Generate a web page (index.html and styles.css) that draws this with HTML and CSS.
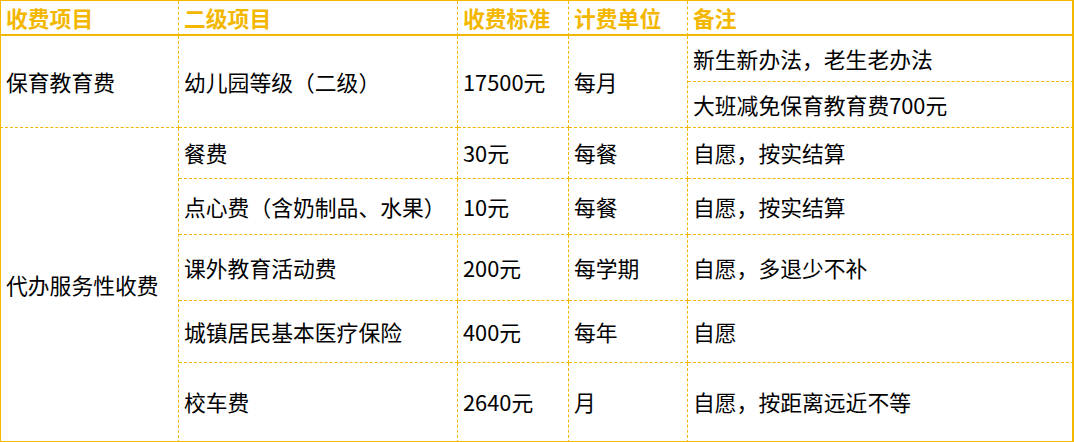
FILE: index.html
```html
<!DOCTYPE html>
<html lang="zh-CN">
<head>
<meta charset="utf-8">
<title>收费项目</title>
<link rel="stylesheet" href="styles.css">
</head>
<body>
<div class="sheet">
  <div class="cell head">收费项目</div>
  <div class="cell head">二级项目</div>
  <div class="cell head">收费标准</div>
  <div class="cell head">计费单位</div>
  <div class="cell head last-col">备注</div>

  <div class="cell span2">保育教育费</div>
  <div class="cell span2">幼儿园等级（二级）</div>
  <div class="cell span2">17500元</div>
  <div class="cell span2">每月</div>
  <div class="cell last-col">新生新办法，老生老办法</div>
  <div class="cell last-col">大班减免保育教育费700元</div>

  <div class="cell span5 last-row">代办服务性收费</div>
  <div class="cell">餐费</div>
  <div class="cell">30元</div>
  <div class="cell">每餐</div>
  <div class="cell last-col">自愿，按实结算</div>

  <div class="cell">点心费（含奶制品、水果）</div>
  <div class="cell">10元</div>
  <div class="cell">每餐</div>
  <div class="cell last-col">自愿，按实结算</div>

  <div class="cell">课外教育活动费</div>
  <div class="cell">200元</div>
  <div class="cell">每学期</div>
  <div class="cell last-col">自愿，多退少不补</div>

  <div class="cell">城镇居民基本医疗保险</div>
  <div class="cell">400元</div>
  <div class="cell">每年</div>
  <div class="cell last-col">自愿</div>

  <div class="cell last-row">校车费</div>
  <div class="cell last-row">2640元</div>
  <div class="cell last-row">月</div>
  <div class="cell last-col last-row">自愿，按距离远近不等</div>
</div>
</body>
</html>
```

FILE: styles.css
```css
html, body {
  margin: 0;
  padding: 0;
  background: #ffffff;
}

.sheet {
  display: grid;
  grid-template-columns: 179px 279px 111px 119px 386px;
  grid-template-rows: 35px 46px 46px 51px 56px 66px 62px 80px;
  width: 1074px;
  box-sizing: border-box;
  border-top: 1px solid #f3b700;
  font-family: "Noto Sans CJK SC", "Microsoft YaHei", sans-serif;
  font-size: 21.8px;
  color: #000000;
}

.cell {
  box-sizing: border-box;
  display: flex;
  align-items: center;
  padding-left: 5px;
  border-right: 1px dashed #f3b700;
  border-bottom: 1px dashed #f3b700;
  white-space: nowrap;
  line-height: 1;
}

.cell:nth-child(1),
.cell.span2:nth-child(6),
.cell.span5 {
  border-left: 1px solid #f3b700;
}

.head {
  font-weight: 700;
  color: #f3b700;
  border-bottom: 2px solid #f3b700;
}

.span2 {
  grid-row: span 2;
}

.span5 {
  grid-row: span 5;
}

.last-col {
  border-right: 2px solid #f3b700;
}

.last-row {
  border-bottom: 2px solid #f3b700;
}
```
